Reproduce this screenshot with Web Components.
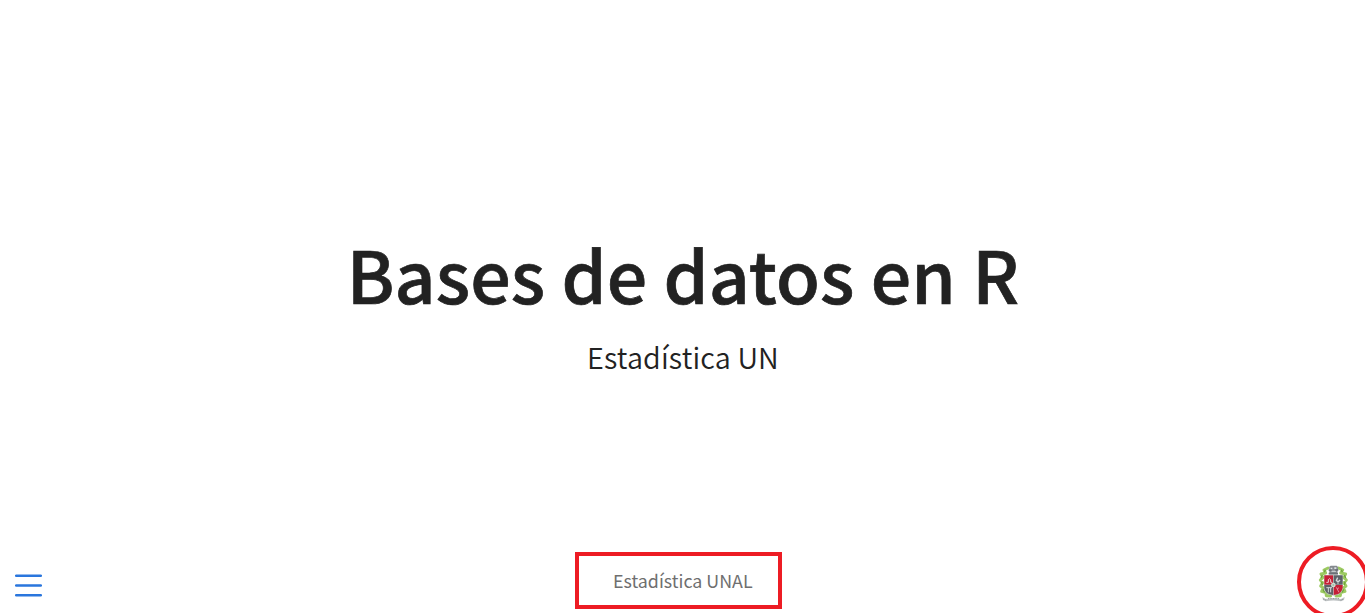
<!DOCTYPE html>
<html lang="es"><head><meta charset="utf-8"><title>Bases de datos en R</title>
<style>html,body{margin:0;height:100%;overflow:hidden;background:#fff}body{font-family:"Noto Sans CJK SC","Noto Sans",sans-serif;color:#222}</style></head>
<body>
<slide-deck>
  <slide-title slot="main"><span slot="title">Bases de datos en R</span><span slot="sub">Estadística UN</span></slide-title>
  <menu-button slot="start"></menu-button>
  <slide-footer slot="middle">Estadística UNAL</slide-footer>
  <un-logo slot="end"></un-logo>
</slide-deck>
<script>
const define=(name,html)=>customElements.define(name,class extends HTMLElement{
  constructor(){super();const t=document.createElement('template');t.innerHTML=html;
    this.attachShadow({mode:'open'}).append(t.content.cloneNode(true));}
});
define('slide-deck',`<style>
:host{display:grid;grid-template-rows:546px 67px;width:1365px;height:613px;overflow:hidden}
.bar{display:grid;grid-template-columns:575px 207px 515px 72px;align-items:start}
.end{grid-column:4}
</style><slot name="main"></slot><div class="bar"><slot name="start"></slot><slot name="middle"></slot><div class="end"><slot name="end"></slot></div></div>`);
define('slide-title',`<style>
:host{display:flex;flex-direction:column;align-items:center;padding:225px 3px 0 0;box-sizing:border-box}
h1,p{margin:0;white-space:nowrap}
h1{font-size:71.5px;font-weight:500;line-height:96px;letter-spacing:.15px;-webkit-text-stroke:.7px #222}
p{font-size:28.75px;font-weight:350;line-height:40px;margin-top:16px;letter-spacing:.14px}
</style><h1><slot name="title"></slot></h1><p><slot name="sub"></slot></p>`);
define('menu-button',`<style>
:host{display:block;padding:28px 0 0 15px}svg{display:block}
</style><svg width="27" height="24" viewBox="0 0 27 24" stroke="#2a76dd" stroke-width="2.5" stroke-linecap="round"><path d="M1.2 1.8h24.6M1.2 11.5h24.6M1.2 21.2h24.6"/></svg>`);
define('slide-footer',`<style>
:host{display:block;box-sizing:border-box;width:207px;height:57px;margin-top:6px;border:4px solid #ed1c24;padding:0 0 0 34px;font-size:17.85px;line-height:48px;color:#6f6f6f;white-space:nowrap}
</style><slot></slot>`);
define('un-logo',`<style>
:host{display:flex;box-sizing:border-box;width:72px;height:72px;border:4px solid #ed1c24;border-radius:50%;padding:10px 0 0 11px}
svg{display:block;flex:none}
</style><svg width="40" height="45" viewBox="0 0 120 135">
<g fill="none" stroke="#9dca63" stroke-width="9" stroke-linecap="round" stroke-linejoin="round"><path d="M48 24L36 30L41 39L27 42L33 52L25 60L32 68L26 78L34 84L29 94L42 98L43 107L56 108M80 24L92 30L86 39L101 42L95 52L103 60L96 68L102 78L94 84L99 94L86 98L85 107L72 108"/></g>
<g fill="none" stroke="#6fa43d" stroke-width="4"><path d="M40 29l-3 8M31 45l-4 9M29 65l2 10M33 88l5 9M48 100l8 5M88 29l3 8M97 45l4 9M99 65l-2 10M95 88l-5 9M80 100l-8 5"/></g>
<path d="M52 20L56 17H74L78 21L76 43H52Z" fill="#85898e"/><path d="M56 23h5v5h-5zM67 22h6v5h-6zM58 32h14v3H58z" fill="#dce1e4"/><path d="M50 30l9 1M70 31l9-2M50 41h28" stroke="#6a7076" stroke-width="5"/>
<path d="M36 45H92V82Q92 106 64 107Q36 105 36 82Z" fill="#c3c9c6"/>
<path d="M37 46H63V74H37Z" fill="#c51f36"/><path d="M65 46H92V74H65Z" fill="#5d6268"/><path d="M37 75H63V105Q37 102 37 82Z" fill="#5d6268"/><path d="M65 75H92V82Q91 103 65 105Z" fill="#c51f36"/>
<path d="M43 67h6v-8q4-6 7 0v8h5" fill="none" stroke="#f0cfd2" stroke-width="3"/><path d="M77 53l-4 8 5 5 6-6M78 64v7" fill="none" stroke="#d5dadd" stroke-width="4"/><path d="M43 83h17M49 84v13M56 84v13" stroke="#d5dadd" stroke-width="3"/><path d="M73 82l8 15M81 83l-6 5" stroke="#e6a0ac" stroke-width="2.5"/>
<circle cx="64" cy="75" r="7" fill="#cfe0d2"/><circle cx="64" cy="75" r="3" fill="#a3bba8"/>
<path d="M31 111l10 6q23-5 46 0l11-6-2 9-9 4q-23-5-46 0l-8-4z" fill="#bfc3c4"/><path d="M34 117l9 4M86 121l9-4M48 116h33" fill="none" stroke="#8d9195" stroke-width="3" stroke-dasharray="3 2"/>
</svg>`);
</script></body></html>
